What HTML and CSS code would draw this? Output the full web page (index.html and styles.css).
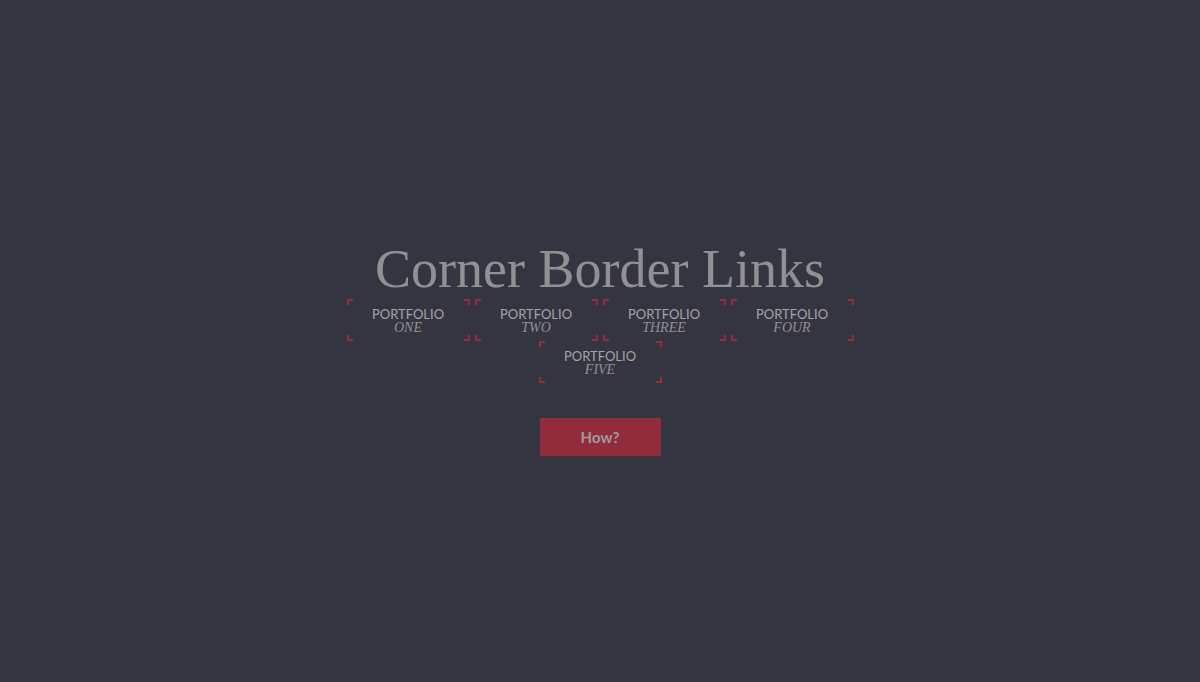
FILE: index.html
```html
<!doctype html>
<html lang="en">
  <head>
    <meta charset="UTF-8" />
    <meta name="viewport" content="width=device-width, initial-scale=1.0" />
    <title>Corner Border Links</title>
    <link rel="stylesheet" href="styles.css">
  </head>
  <body>
    <main class="wrap">
      <h1 class="title">Corner Border Links</h1>
      <nav class="links">
        <a class="corner-link" href="#"><span class="label">Portfolio</span><em>One</em></a>
        <a class="corner-link" href="#"><span class="label">Portfolio</span><em>Two</em></a>
        <a class="corner-link" href="#"><span class="label">Portfolio</span><em>Three</em></a>
        <a class="corner-link" href="#"><span class="label">Portfolio</span><em>Four</em></a>
        <a class="corner-link" href="#"><span class="label">Portfolio</span><em>Five</em></a>
      </nav>
      <a class="how" href="#">How?</a>
    </main>
  </body>
</html>
```

FILE: styles.css
```css
html, body {
  height: 100%;
}

body {
  margin: 0;
  background-color: #343540;
  color: #8f9092;
  font-family: Lato, "Liberation Sans", sans-serif;
  display: flex;
  align-items: center;
  justify-content: center;
}

.wrap {
  display: flex;
  flex-direction: column;
  align-items: center;
  width: 520px;
  margin-top: 16px;
}

.title {
  margin: 0;
  font-family: "Liberation Serif", serif;
  font-weight: normal;
  font-size: 54px;
  line-height: 54px;
  color: #909192;
}

.links {
  display: flex;
  flex-wrap: wrap;
  justify-content: center;
  column-gap: 5px;
  width: 520px;
  margin-top: 3px;
}

/* four corner brackets drawn with gradients */
.corner-link {
  --c: #9b2a3d;
  display: flex;
  flex-direction: column;
  align-items: center;
  justify-content: center;
  width: 123px;
  height: 42px;
  box-sizing: border-box;
  text-decoration: none;
  color: #a3a4a6;
  background:
    linear-gradient(var(--c), var(--c)) left top / 6px 2px,
    linear-gradient(var(--c), var(--c)) left top / 2px 6px,
    linear-gradient(var(--c), var(--c)) right top / 6px 2px,
    linear-gradient(var(--c), var(--c)) right top / 2px 6px,
    linear-gradient(var(--c), var(--c)) left bottom / 6px 2px,
    linear-gradient(var(--c), var(--c)) left bottom / 2px 6px,
    linear-gradient(var(--c), var(--c)) right bottom / 6px 2px,
    linear-gradient(var(--c), var(--c)) right bottom / 2px 6px;
  background-repeat: no-repeat;
}

.corner-link .label {
  font-size: 13px;
  line-height: 14px;
  text-transform: uppercase;
}

.corner-link em {
  font-family: "Liberation Serif", serif;
  font-size: 14px;
  line-height: 13px;
  text-transform: uppercase;
  color: #8f9092;
}

.how {
  margin-top: 35px;
  width: 121px;
  height: 38px;
  display: flex;
  align-items: center;
  justify-content: center;
  background-color: #922c3c;
  color: #a09a9c;
  font-weight: bold;
  font-size: 15px;
  text-decoration: none;
}
```
